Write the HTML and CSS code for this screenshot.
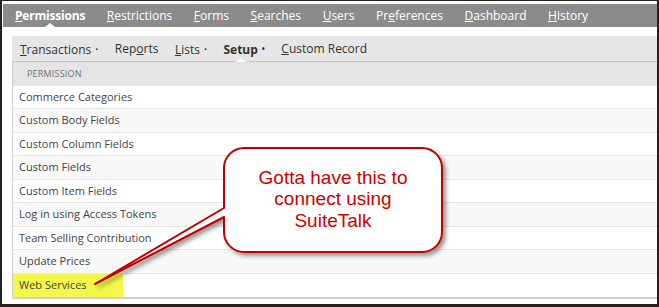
FILE: index.html
```html
<!DOCTYPE html>
<html lang="en">
<head>
<meta charset="UTF-8">
<title>Permissions - Setup</title>
<link rel="stylesheet" href="styles.css">
</head>
<body>

<div class="frame">
  <div class="nav">
    <span class="nav-item active"><u>P</u>ermissions</span>
    <span class="nav-item"><u>R</u>estrictions</span>
    <span class="nav-item"><u>F</u>orms</span>
    <span class="nav-item"><u>S</u>earches</span>
    <span class="nav-item"><u>U</u>sers</span>
    <span class="nav-item">Pr<u>e</u>ferences</span>
    <span class="nav-item"><u>D</u>ashboard</span>
    <span class="nav-item"><u>H</u>istory</span>
  </div>

  <div class="content">
    <div class="subtabs">
      <span class="subtab"><u>T</u>ransactions<span class="dot">&bull;</span></span>
      <span class="subtab">Rep<u>o</u>rts</span>
      <span class="subtab"><u>L</u>ists<span class="dot">&bull;</span></span>
      <span class="subtab active">Setup<span class="dot">&bull;</span></span>
      <span class="subtab"><u>C</u>ustom Record</span>
    </div>

    <div class="perm-table">
      <div class="perm-head">Permission</div>
      <div class="perm-row">Commerce Categories</div>
      <div class="perm-row">Custom Body Fields</div>
      <div class="perm-row">Custom Column Fields</div>
      <div class="perm-row">Custom Fields</div>
      <div class="perm-row">Custom Item Fields</div>
      <div class="perm-row">Log in using Access Tokens</div>
      <div class="perm-row">Team Selling Contribution</div>
      <div class="perm-row">Update Prices</div>
      <div class="perm-row"><span class="highlight">Web Services</span></div>
    </div>
  </div>

  <!-- annotation bubble drawn over the screenshot -->
  <div class="callout">
    <svg class="callout-shape" width="659" height="307" viewBox="0 0 659 307">
      <defs>
        <filter id="shadow" x="-10%" y="-10%" width="130%" height="130%">
          <feDropShadow dx="3" dy="3" stdDeviation="2" flood-color="#000" flood-opacity="0.4"/>
        </filter>
      </defs>
      <path d="M244 148 H422 A20 20 0 0 1 442 168 V232 A20 20 0 0 1 422 252 H244 A20 20 0 0 1 224 232 V217 L95 284 L224 208 V168 A20 20 0 0 1 244 148 Z"
            fill="#fff" stroke="#c00000" stroke-width="2" stroke-linejoin="round" filter="url(#shadow)"/>
    </svg>
    <div class="callout-text">Gotta have this to<br>connect using<br>SuiteTalk</div>
  </div>
</div>

</body>
</html>
```

FILE: styles.css
```css
body {
  margin: 0;
  padding: 0;
  background-color: #fff;
  font-family: "Open Sans", "Liberation Sans", sans-serif;
}

.frame {
  position: relative;
  width: 659px;
  height: 307px;
  box-sizing: border-box;
  border-style: solid;
  border-color: #222;
  border-width: 1px 2px 3px 2px;
  padding-top: 3px;
  overflow: hidden;
}

.nav {
  display: flex;
  align-items: center;
  gap: 21.6px;
  height: 23px;
  margin-left: 1px;
  padding-left: 12px;
  background-color: #8b8b8b;
}

.nav-item {
  position: relative;
  color: #fff;
  font-size: 12px;
  line-height: 23px;
}

.nav-item.active {
  font-weight: bold;
  letter-spacing: -0.2px;
}

.nav-item.active::after {
  content: "";
  position: absolute;
  left: 50%;
  bottom: 0;
  margin-left: -5px;
  border-left: 5px solid transparent;
  border-right: 5px solid transparent;
  border-bottom: 4px solid #fff;
}

.content {
  padding: 9px 0 0 10px;
}

.subtabs {
  display: flex;
  align-items: center;
  gap: 16.5px;
  height: 25px;
  padding-left: 8px;
  background-color: #e6e6e6;
  border-bottom: 1px solid #c6c6c6;
}

.subtab {
  position: relative;
  color: #333;
  font-size: 12px;
  line-height: 25px;
}

.subtab .dot {
  font-size: 8px;
  margin-left: 4px;
  vertical-align: 2px;
}

.subtab.active {
  font-weight: bold;
}

.subtab.active::after {
  content: "";
  position: absolute;
  left: 50%;
  bottom: 0;
  margin-left: -9px;
  border-left: 6px solid transparent;
  border-right: 6px solid transparent;
  border-bottom: 3px solid #fff;
}

.perm-table {
  border-left: 1px solid #cfcfcf;
  border-bottom: 2px solid #cfcfcf;
}

.perm-head {
  height: 24px;
  line-height: 24px;
  padding-left: 14px;
  background-color: #e4e4e4;
  color: #707070;
  font-size: 9px;
  text-transform: uppercase;
  letter-spacing: 0.2px;
}

.perm-row {
  height: 23.44px;
  box-sizing: border-box;
  line-height: 21px;
  padding-left: 6px;
  color: #444;
  font-size: 11px;
  border-bottom: 1px solid #e6e6e6;
  background-color: #fff;
}

.perm-row:nth-child(odd) {
  background-color: #f8f8f8;
}

.perm-row:last-child {
  border-bottom: none;
  padding-left: 0;
}

.highlight {
  display: block;
  width: 104px;
  height: 100%;
  padding-left: 6px;
  background-color: #f3f74a;
}

.callout {
  position: absolute;
  left: -2px;
  top: -1px;
  width: 659px;
  height: 307px;
}

.callout-shape {
  display: block;
}

.callout-text {
  position: absolute;
  left: 224px;
  top: 147px;
  width: 218px;
  height: 104px;
  display: flex;
  align-items: center;
  justify-content: center;
  text-align: center;
  font-family: "Liberation Sans", Arial, sans-serif;
  font-size: 19px;
  line-height: 21.5px;
  color: #cc0000;
}
```
